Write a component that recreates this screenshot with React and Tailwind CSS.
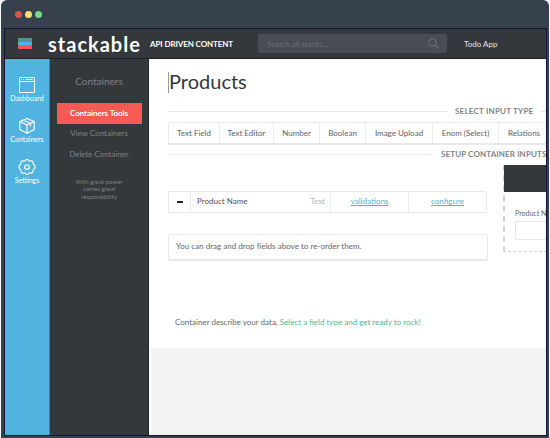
import React from 'react';

const fieldTypes = [
  ['Text Field', 'w-[51px]'],
  ['Text Editor', 'w-[54px]'],
  ['Number', 'w-[46px]'],
  ['Boolean', 'w-[46px]'],
  ['Image Upload', 'w-[67px]'],
  ['Enom (Select)', 'w-[66px]'],
  ['Relations', 'w-[51px]'],
];

function BrowserIcon() {
  return (
    <svg viewBox="0 0 18 18" className="h-[18px] w-[18px]" fill="none" stroke="currentColor" strokeWidth="1.1">
      <rect x="1.5" y="1.5" width="15" height="15" rx="1" />
      <path d="M1.5 5.5h15M3 3.5h1M5 3.5h1M7.5 3.5h7" />
    </svg>
  );
}

function BoxIcon() {
  return (
    <svg viewBox="0 0 18 18" className="h-[18px] w-[18px]" fill="none" stroke="currentColor" strokeWidth="1.1" strokeLinejoin="round">
      <path d="M9 1.5 16.2 4.5v8L9 16.3 1.8 12.5v-8zM1.8 4.5 9 8l7.2-3.5M9 8v8.3M5.2 3.1l7.4 3.5v3" />
    </svg>
  );
}

function GearIcon() {
  return (
    <svg viewBox="0 0 18 18" className="h-[18px] w-[18px]" fill="none" stroke="currentColor" strokeWidth="1.1" strokeLinejoin="round">
      <path d="M7.3 2.6Q9 .2 10.7 2.6q.8.9 1.7.3 2.7-.5 2.7 2.4 0 1 1 1.5 2 2.2 0 4.1-1 .6-1 1.7 0 2.9-2.7 2.5-1-.5-1.7.3Q9 17.8 7.3 15.4q-.8-.8-1.7-.3-2.7.4-2.7-2.5 0-1.1-1-1.7-2-1.9 0-4.1 1-.5 1-1.5 0-2.9 2.7-2.4.9.6 1.7-.3z" />
      <circle cx="9" cy="9" r="2.3" />
    </svg>
  );
}

function NavItem({ icon, label }) {
  return (
    <div className="flex h-[41px] flex-col items-center text-white">
      {icon}
      <span className="whitespace-nowrap text-[7px] leading-[9px]">{label}</span>
    </div>
  );
}

export default function App() {
  return (
    <div className="h-[438px] w-[550px] overflow-hidden bg-[#fafafa] pl-px pr-px font-['Lato','Open_Sans',sans-serif]">
      <div className="flex h-full w-full flex-col overflow-hidden rounded-t-[6px] bg-[#36414d] pb-[2px] pl-[3px] pr-[2px]">
        <div className="flex h-7 shrink-0 items-center gap-[3px] pl-[11px]">
          <i className="h-[7px] w-[7px] rounded-full bg-[#d65451]" />
          <i className="h-[7px] w-[7px] rounded-full bg-[#fddc72]" />
          <i className="h-[7px] w-[7px] rounded-full bg-[#70dc84]" />
        </div>
        <div className="flex min-h-0 flex-1 flex-col overflow-hidden border border-[#10153a] bg-white">
          <header className="flex h-[30px] shrink-0 items-center border-b border-[#1d1f24] bg-[#34373b]">
            <div className="ml-[13px] flex w-[14px] flex-col">
              <i className="h-[4px] rounded-[1px] bg-[#56968a]" />
              <i className="h-[3px] bg-[#4fb4e2]" />
              <i className="h-[4px] rounded-[1px] bg-[#f4574f]" />
            </div>
            <span className="ml-[16px] w-[102px] whitespace-nowrap text-[20px] font-bold leading-5 tracking-[1px] text-white">stackable</span>
            <span className="w-[108px] whitespace-nowrap text-[8px] font-bold leading-3 tracking-[-0.1px] text-white">API DRIVEN CONTENT</span>
            <div className="flex h-[19px] w-[189px] shrink-0 items-center justify-between rounded-[2px] bg-[#494d53] pl-[9px] pr-[8px] text-[8px]">
              <span className="whitespace-nowrap tracking-[-0.1px] text-[#676b70]">Search all stacks...</span>
              <svg viewBox="0 0 11 11" className="h-[11px] w-[11px]" fill="none" stroke="#696e76" strokeWidth="1.1">
                <circle cx="4.5" cy="4.5" r="3.6" /><path d="m7.2 7.2 3.2 3.2" />
              </svg>
            </div>
            <span className="ml-[17px] whitespace-nowrap text-[8px] text-[#e5e6e8]">Todo App</span>
          </header>
          <div className="flex min-h-0 flex-1">
            <nav className="w-[45px] shrink-0 border-r border-[#3488ac] bg-[#51b3df] pt-[17px]">
              <NavItem icon={<BrowserIcon />} label="Dashboard" />
              <NavItem icon={<BoxIcon />} label="Containers" />
              <NavItem icon={<GearIcon />} label="Settings" />
            </nav>
            <aside className="flex w-[99px] shrink-0 flex-col items-center border-r border-[#202225] bg-[#35383b] text-[#7c818a]">
              <h2 className="mt-[15px] text-[10px] leading-[14px]">Containers</h2>
              <div className="mt-[15px] h-[21px] w-[85px] bg-[#f65a54] text-center text-[8px] font-bold leading-[20px] tracking-[-0.05px] text-white">Containers Tools</div>
              <div className="h-[20px] text-[8px] leading-[19px]">View Containers</div>
              <div className="h-[21px] text-[8px] leading-[20px] tracking-[-0.05px]">Delete Container</div>
              <p className="mt-[13px] text-center text-[6px] leading-[7.3px] tracking-[0.05px]">With great power<br />comes great<br />responsibility</p>
            </aside>
            <main className="flex min-w-0 flex-1 flex-col overflow-hidden">
              <section className="flex h-[289px] shrink-0 flex-col pl-[19px]">
                <h1 className="mt-[13px] h-[21px] w-[90px] border-l border-[#999] text-[20px] leading-[19px] text-[#34373b]">Products</h1>
                <div className="mt-[12px] flex h-[12px] items-center text-[8px] font-bold text-[#7d8388]">
                  <i className="h-px w-[279px] shrink-0 bg-[#e9e9e9]" />
                  <span className="w-[94px] shrink-0 whitespace-nowrap pl-[8px] tracking-[0.22px]">SELECT INPUT TYPE</span>
                  <i className="h-px flex-1 bg-[#e9e9e9]" />
                </div>
                <div className="mt-[5px] flex h-[23px] w-[400px] shrink-0 rounded-[2px] border border-b-2 border-[#e9e9e9] text-[8px] leading-[20px] text-[#5e6369]">
                  {fieldTypes.map(([label, width]) => (
                    <div key={label} className={`shrink-0 whitespace-nowrap border-r border-[#ececec] text-center ${width}`}>{label}</div>
                  ))}
                </div>
                <div className="mt-[3px] flex h-[12px] shrink-0 items-center text-[8px] font-bold text-[#7d8388]">
                  <i className="h-px w-[265px] shrink-0 bg-[#e9e9e9]" />
                  <span className="shrink-0 whitespace-nowrap pl-[8px] tracking-[0.12px]">SETUP CONTAINER INPUTS</span>
                </div>
                <div className="flex">
                  <div className="w-[335px] shrink-0">
                    <div className="mt-[31px] flex h-[22px] w-[319px] rounded-[2px] border border-[#e9e9e9] text-[8px] leading-[19px]">
                      <div className="flex w-[22px] items-center justify-center border-r border-[#ececec]"><i className="h-[2px] w-[6px] bg-[#222]" /></div>
                      <div className="flex w-[140px] justify-between border-r border-[#ececec] pl-[6px] pr-[5px] text-[#4f5459]"><span>Product Name</span><span className="text-[#b2b5b8]">Text</span></div>
                      <div className="w-[78px] border-r border-[#ececec] text-center text-[#55b0dc] underline">validations</div>
                      <div className="flex-1 text-center text-[#55b0dc] underline">configure</div>
                    </div>
                    <div className="mt-[21px] h-[27px] w-[320px] rounded-[2px] border border-b-2 border-[#e9e9e9] pl-[7px] text-[8px] leading-[23px] tracking-[0.02px] text-[#62676c]">You can drag and drop fields above to re-order them.</div>
                    <p className="mt-[55px] pl-[7px] text-[8px] leading-[12px] text-[#62676c]">Container describe your data. <span className="text-[#52b69a]">Select a field type and get ready to rock!</span></p>
                  </div>
                  <div className="mt-[5px] h-[87px] w-[80px] shrink-0 border-b border-l-2 border-dashed border-[#d2d2d2]">
                    <div className="-ml-px h-[27px] bg-[#34373b]" />
                    <div className="ml-[10px] mt-[16px] whitespace-nowrap text-[7px] leading-[10px] text-[#5e6369]">Product Name</div>
                    <div className="ml-[10px] mt-[3px] h-[19px] rounded-[2px] border border-[#e5e5e5]" />
                  </div>
                </div>
              </section>
              <div className="ml-[2px] flex-1 bg-[#f2f2f2]" />
            </main>
          </div>
        </div>
      </div>
    </div>
  );
}
